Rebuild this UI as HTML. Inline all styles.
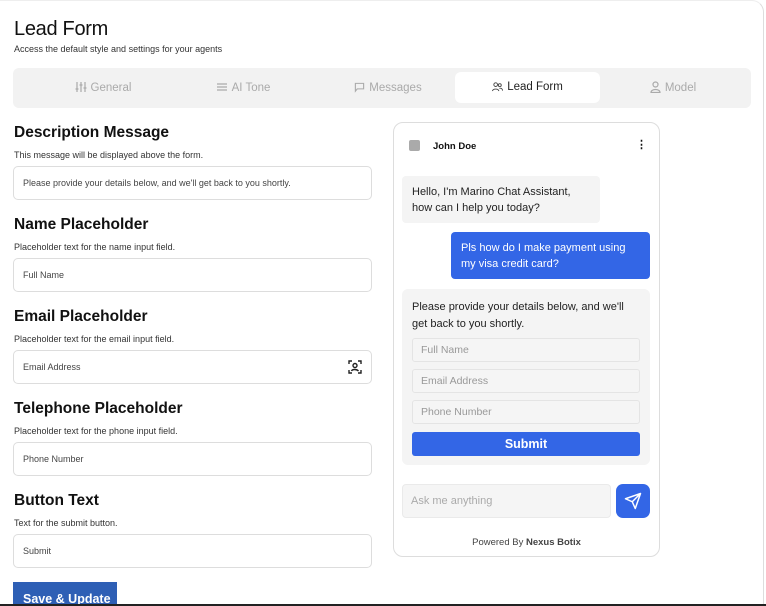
<!DOCTYPE html>
<html><head><meta charset="utf-8"><style>
*{box-sizing:border-box;margin:0;padding:0}
body{width:766px;height:606px;overflow:hidden;background:#fff;font-family:"Liberation Sans",sans-serif;position:relative;color:#111}
.frame{position:absolute;left:0;top:0;width:764px;height:604px;border-right:1px solid #ddd;border-top-right-radius:12px;border-top:1px solid #eee}
.botline{position:absolute;left:0;top:604px;width:766px;height:2px;background:#222}
.a{position:absolute}
h1{position:absolute;left:14px;top:18px;font-size:20px;font-weight:500;letter-spacing:-0.3px}
.sub{font-size:9px;color:#333}
.tabs{position:absolute;left:13px;top:68px;width:738px;height:40px;background:#f2f2f2;border-radius:6px}
.tab{position:absolute;top:0;height:40px;line-height:40px;font-size:11.5px;color:#aaa;text-align:center}
.tab svg{vertical-align:-2px;margin-right:4px}
.tab.act{background:#fff;border-radius:6px;top:4px;height:31px;line-height:31px;color:#222}
.lbl{position:absolute;left:14px;font-size:15.5px;font-weight:bold;color:#111}
.inp{position:absolute;left:13px;width:359px;height:34px;border:1px solid #ddd;border-radius:5px;font-size:9px;color:#444;padding-left:9px;line-height:32px}
.btn{position:absolute;left:13px;top:582px;width:104px;height:24px;background:#2e5fb5;color:#fff;font-size:12.5px;font-weight:bold;padding:11px 0 0 10px;line-height:12px}
.card{position:absolute;left:393px;top:122px;width:267px;height:435px;border:1px solid #ddd;border-radius:10px}
.fi{position:absolute;left:412px;width:228px;height:24px;border:1px solid #e4e4e4;background:#f5f5f5;border-radius:3px;font-size:10.5px;color:#999;padding-left:8px;line-height:22px}
</style></head><body>
<div class="frame"></div>
<h1>Lead Form</h1>
<div class="a sub" style="left:14px;top:44px">Access the default style and settings for your agents</div>
<div class="tabs">
<div class="tab" style="left:30px;width:120px"><svg width="12" height="12" viewBox="0 0 12 12" fill="none" stroke="#aaa" stroke-width="1.2"><path d="M2 1v10M6 1v10M10 1v10M0.5 8h3M4.5 4h3M8.5 7h3"/></svg>General</div>
<div class="tab" style="left:170px;width:120px"><svg width="12" height="12" viewBox="0 0 12 12" fill="none" stroke="#aaa" stroke-width="1.2"><path d="M1 3h10M1 6h10M1 9h10"/></svg>AI Tone</div>
<div class="tab" style="left:315px;width:120px"><svg width="11" height="11" viewBox="0 0 12 12" fill="none" stroke="#aaa" stroke-width="1.2"><path d="M1.5 1.5h9v6h-7l-2 2.5z"/></svg>Messages</div>
<div class="tab act" style="left:442px;width:145px"><svg width="11" height="11" viewBox="0 0 12 12" fill="none" stroke="#444" stroke-width="1"><circle cx="4" cy="4" r="2"/><circle cx="8.5" cy="4.5" r="1.6"/><path d="M0.5 11c.5-3 6.5-3 7 0M8 8c2-.5 3.5.5 3.5 2.5"/></svg>Lead Form</div>
<div class="tab" style="left:600px;width:120px"><svg width="11" height="12" viewBox="0 0 11 12" fill="none" stroke="#aaa" stroke-width="1.2"><circle cx="5.5" cy="3.5" r="2.5"/><path d="M1 11.5c0-4 9-4 9 0z"/></svg>Model</div>
</div>
<div class="lbl" style="top:124px">Description Message</div>
<div class="a sub" style="left:14px;top:150px">This message will be displayed above the form.</div>
<div class="inp" style="top:166px">Please provide your details below, and we'll get back to you shortly.</div>
<div class="lbl" style="top:216px">Name Placeholder</div>
<div class="a sub" style="left:14px;top:242px">Placeholder text for the name input field.</div>
<div class="inp" style="top:258px">Full Name</div>
<div class="lbl" style="top:308px">Email Placeholder</div>
<div class="a sub" style="left:14px;top:334px">Placeholder text for the email input field.</div>
<div class="inp" style="top:350px">Email Address
<svg style="position:absolute;right:9px;top:9px" width="14" height="14" viewBox="0 0 14 14" fill="none" stroke="#222" stroke-width="1.4"><path d="M1 4V1h3M10 1h3v3M13 10v3h-3M4 13H1v-3"/><circle cx="7" cy="5.5" r="2"/><path d="M3.5 11c.8-2 5.2-2 7 0"/></svg></div>
<div class="lbl" style="top:400px">Telephone Placeholder</div>
<div class="a sub" style="left:14px;top:426px">Placeholder text for the phone input field.</div>
<div class="inp" style="top:442px">Phone Number</div>
<div class="lbl" style="top:492px">Button Text</div>
<div class="a sub" style="left:14px;top:518px">Text for the submit button.</div>
<div class="inp" style="top:534px">Submit</div>
<div class="btn">Save &amp; Update</div>

<div class="card"></div>
<div class="a" style="left:409px;top:140px;width:11px;height:11px;background:#aaa;border-radius:2px"></div>
<div class="a" style="left:433px;top:141px;font-size:9.5px;font-weight:bold">John Doe</div>
<div class="a" style="left:636px;top:138px;font-size:11px;font-weight:bold">⋮</div>
<div class="a" style="left:402px;top:176px;width:198px;height:47px;background:#f4f4f4;border-radius:4px;font-size:11px;line-height:16px;padding:8px 10px;color:#222">Hello, I'm Marino Chat Assistant, how can I help you today?</div>
<div class="a" style="left:451px;top:232px;width:199px;height:47px;background:#3366e6;border-radius:4px;font-size:11px;line-height:16px;padding:8px 10px;color:#fff">Pls how do I make payment using my visa credit card?</div>
<div class="a" style="left:402px;top:289px;width:248px;height:176px;background:#f4f4f4;border-radius:6px"></div>
<div class="a" style="left:412px;top:299px;width:230px;font-size:11px;line-height:17px;color:#222">Please provide your details below, and we'll get back to you shortly.</div>
<div class="fi" style="top:338px">Full Name</div>
<div class="fi" style="top:369px">Email Address</div>
<div class="fi" style="top:400px">Phone Number</div>
<div class="a" style="left:412px;top:432px;width:228px;height:24px;background:#3366e6;border-radius:3px;color:#fff;font-size:12.5px;font-weight:bold;text-align:center;line-height:24px">Submit</div>
<div class="a" style="left:402px;top:484px;width:209px;height:34px;background:#f5f5f5;border:1px solid #eaeaea;border-radius:4px;font-size:11px;color:#aaa;padding-left:8px;line-height:32px">Ask me anything</div>
<div class="a" style="left:616px;top:484px;width:34px;height:34px;background:#3366e6;border-radius:7px">
<svg style="position:absolute;left:8px;top:8px" width="18" height="18" viewBox="0 0 24 24" fill="none" stroke="#fff" stroke-width="2" stroke-linejoin="round"><path d="M22 2L11 13M22 2l-7 20-4-9-9-4z"/></svg></div>
<div class="a" style="left:393px;top:537px;width:267px;text-align:center;font-size:9.5px;color:#444">Powered By <b>Nexus Botix</b></div>
<div class="botline"></div>
</body></html>
